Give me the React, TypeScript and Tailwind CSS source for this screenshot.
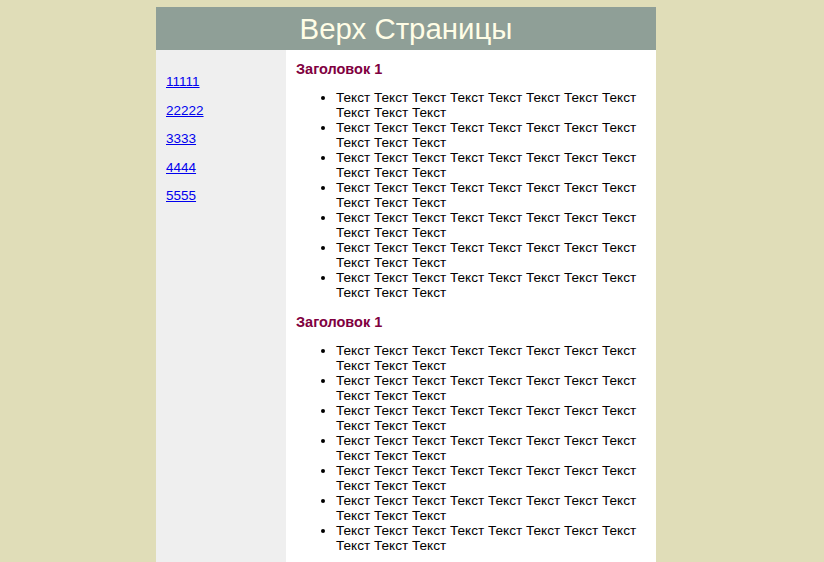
const links = ['11111', '22222', '3333', '4444', '5555']

const items = Array.from({ length: 7 }, () => 'Текст Текст Текст Текст Текст Текст Текст Текст Текст Текст Текст')

function Section() {
  return (
    <div>
      <h2 className="text-[14.5px] leading-[16px] font-bold text-[#800040]">Заголовок 1</h2>
      <ul className="list-disc pl-10 mt-[13px] mb-[14px]">
        {items.map((t, i) => (
          <li key={i}>{t}</li>
        ))}
      </ul>
    </div>
  )
}

export default function App() {
  return (
    <div
      className="min-h-screen bg-[#e0ddb8] pt-[7px] pr-[12px]"
      style={{ fontFamily: '"Liberation Sans", Arial, sans-serif' }}
    >
      <div className="mx-auto w-[500px]">
        <div className="h-[43px] bg-[#8f9f97] flex items-center justify-center pt-[2px] text-[29.4px] text-[#fffde6]">
          Верх Страницы
        </div>
        <div className="flex">
          <div className="w-[130px] bg-[#efefef] px-[10px] pt-[11px] text-[13.5px] leading-[15px]">
            {links.map((l) => (
              <p key={l} className="my-[13.4px]">
                <a href="#" className="text-[#0000ee] underline">
                  {l}
                </a>
              </p>
            ))}
          </div>
          <div className="flex-1 bg-white px-[10px] pt-[11px] pb-[10px] text-[13.6px] leading-[15px] text-black">
            <Section />
            <Section />
          </div>
        </div>
      </div>
    </div>
  )
}
